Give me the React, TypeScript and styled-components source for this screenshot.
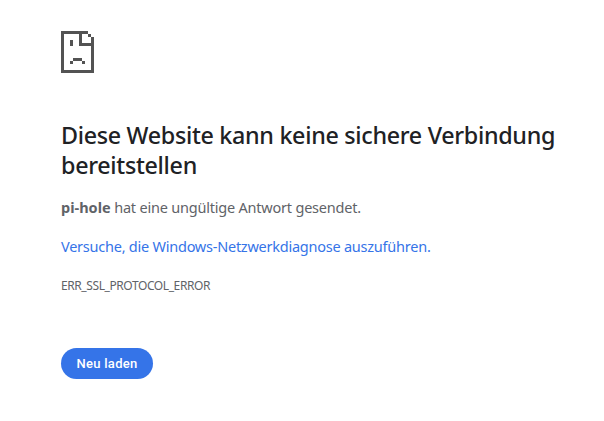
import React from "react";
import styled, { createGlobalStyle } from "styled-components";

const GlobalStyle = createGlobalStyle`
  body {
    margin: 0;
    background: #fff;
    color: #5f6368;
    font-family: "Noto Sans", "Open Sans", sans-serif;
    font-size: 15px;
  }
`;

const Page = styled.main`
  box-sizing: border-box;
  width: 604px;
  height: 421px;
  padding: 31px 40px 0 61px;
`;

const Icon = styled.svg`
  display: block;
  width: 33px;
  height: 42px;
  margin-bottom: 47px;
`;

const Title = styled.h1`
  margin: 0 0 15px;
  color: #202124;
  font-size: 23.3px;
  font-weight: 500;
  line-height: 30px;
  letter-spacing: -0.31px;
  white-space: nowrap;
`;

const Paragraph = styled.p<{ $spacing: number }>`
  margin: 0 0 15px;
  font-size: 14.5px;
  line-height: 24px;
  letter-spacing: ${(p) => p.$spacing}px;
  white-space: nowrap;
`;

const HostName = styled.strong`
  font-weight: 700;
  letter-spacing: 0;
`;

const DiagnosticsLink = styled.a`
  color: #3574e8;
  text-decoration: none;
`;

const ErrorCode = styled.div`
  margin: 17px 0 51px;
  font-size: 12px;
  line-height: 22px;
  letter-spacing: -0.41px;
`;

const ReloadButton = styled.button`
  display: block;
  width: 92px;
  height: 31px;
  padding: 0;
  border: 0;
  border-radius: 16px;
  background: #3574e8;
  color: #fff;
  font: 500 13px/31px Roboto, sans-serif;
  letter-spacing: 0.3px;
  text-align: center;
`;

const SadPage = () => (
  <Icon viewBox="0 0 11 14" fill="#535353" shapeRendering="crispEdges" aria-hidden="true">
    <path d="M0 0h9v1H7v3h3V2h1v12H0zM1 1v12h9V5H6V1z" fillRule="evenodd" />
    <path d="M9 1h1v1H9zM3 3h1v2H3zM4 9h3v1H4zM3 10h1v1H3zM7 10h1v1H7z" />
  </Icon>
);

export default function App() {
  return (
    <>
      <GlobalStyle />
      <Page>
        <SadPage />
        <Title>
          Diese Website kann keine sichere Verbindung
          <br />
          bereitstellen
        </Title>
        <Paragraph $spacing={-0.21}>
          <HostName>pi-hole</HostName> hat eine ungültige Antwort gesendet.
        </Paragraph>
        <Paragraph $spacing={-0.24}>
          <DiagnosticsLink href="#">Versuche, die Windows-Netzwerkdiagnose auszuführen.</DiagnosticsLink>
        </Paragraph>
        <ErrorCode>ERR_SSL_PROTOCOL_ERROR</ErrorCode>
        <ReloadButton>Neu laden</ReloadButton>
      </Page>
    </>
  );
}
